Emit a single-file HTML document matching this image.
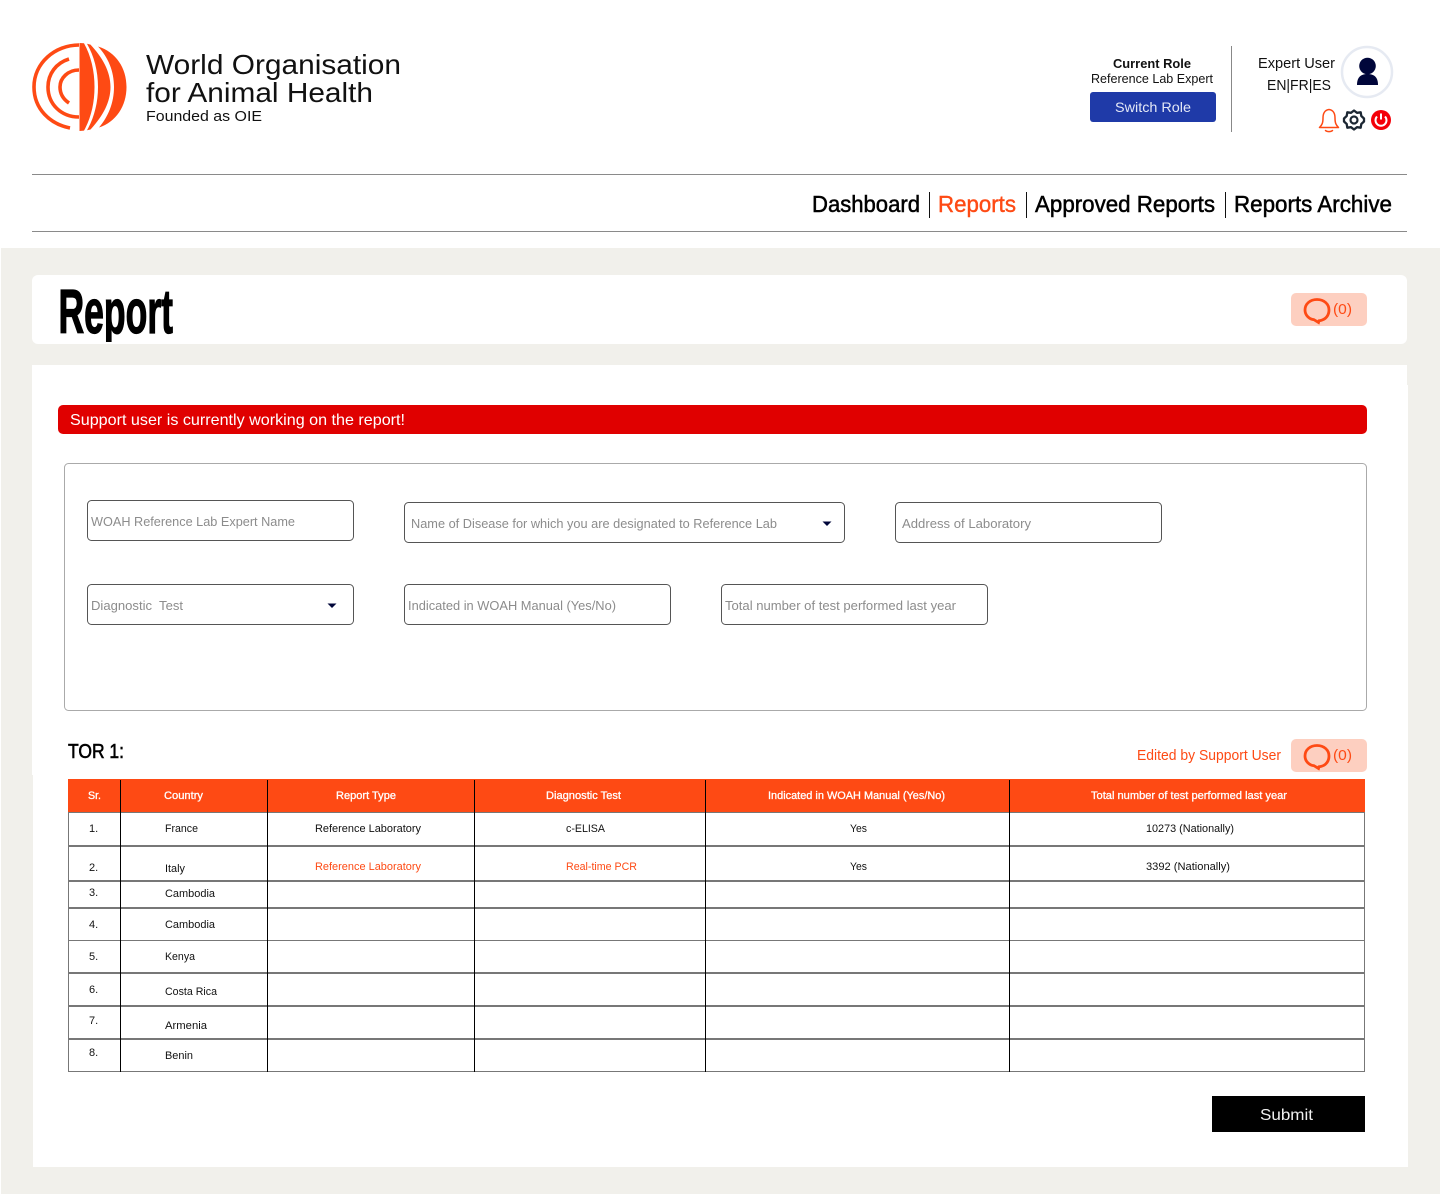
<!DOCTYPE html>
<html lang="en"><head><meta charset="utf-8"><title>Report</title>
<style>
html,body{margin:0;padding:0;background:#fff;width:1440px;height:1194px;overflow:hidden}
svg{display:block;position:absolute;left:0;top:0}
text{font-family:"Liberation Sans",sans-serif;white-space:pre}
.ph{font-size:13px;fill:#8c8c8c}
.th{font-size:11px;fill:#fff;stroke:#fff;stroke-width:.3px}
.td{font-size:11px;fill:#111}
.or{fill:#fe4a14}
</style></head><body>
<svg width="1440" height="1194" viewBox="0 0 1440 1194" xmlns="http://www.w3.org/2000/svg">
<defs><clipPath id="rp"><rect x="50" y="280" width="130" height="62"/></clipPath></defs>
<rect x="1" y="248" width="1439" height="946" fill="#f1f0eb"/>
<!-- logo -->
<g fill="none" stroke="#fe4a14" stroke-width="3.600">
<path d="M79 45C55 45 34 63 34 87C34 109 50 124 70 128"/>
<path d="M69 59C56 63 48 74 48 87C48 104 61 117 79 117"/>
<path d="M79 70C68 70 60 78 60 87C60 94 63 99 69 103"/>
</g>
<g fill="#fe4a14">
<path d="M79.500 43L84 43.300C91 56 94.500 71 94.500 87C94.500 103 91 118 84 130.600L79.500 131Z"/>
<path d="M87 43.800L90.500 44.600C102 57 110.500 71 110.500 87C110.500 103 102 117 90.500 129.500L87 130.300C94 118 98 103 98 87C98 71 94 56 87 43.800Z"/>
<path d="M98 46.500C116 52 126.500 68 126.500 87C126.500 106 116 122 99 127.500C108 117 114 103 114 87C114 71 108 57 98 46.500Z"/>
</g>
<text x="146" y="74" font-size="28" textLength="255" lengthAdjust="spacingAndGlyphs" fill="#111">World Organisation</text>
<text x="146" y="102" font-size="28" textLength="227" lengthAdjust="spacingAndGlyphs" fill="#111">for Animal Health</text>
<text x="146" y="121" font-size="15" textLength="116" lengthAdjust="spacingAndGlyphs" fill="#111">Founded as OIE</text>
<!-- role -->
<text x="1113" y="68" font-size="13" font-weight="700" textLength="78" lengthAdjust="spacingAndGlyphs" fill="#111">Current Role</text>
<text x="1091" y="83" font-size="12.500" textLength="122" lengthAdjust="spacingAndGlyphs" fill="#111">Reference Lab Expert</text>
<rect x="1090" y="92" width="126" height="30" rx="3" fill="#1f3aa8"/>
<text x="1115" y="112" font-size="14" textLength="76" lengthAdjust="spacingAndGlyphs" fill="#e4e8f6">Switch Role</text>
<rect x="1231" y="46" width="1" height="86" fill="#888"/>
<text x="1258" y="68" font-size="14.500" textLength="77" lengthAdjust="spacingAndGlyphs" fill="#111">Expert User</text>
<text x="1267" y="90" font-size="14.500" textLength="64" lengthAdjust="spacingAndGlyphs" fill="#111">EN|FR|ES</text>
<circle cx="1367" cy="72" r="25" fill="#fff" stroke="#e6eaf2" stroke-width="2.500"/>
<circle cx="1367.500" cy="66" r="8.300" fill="#00063a"/>
<path d="M1357 85C1357 77 1361 74 1367.500 74C1374 74 1378 77 1378 85Z" fill="#00063a"/>
<!-- bell -->
<g fill="none" stroke="#fe4a14" stroke-width="1.500" stroke-linejoin="round" stroke-linecap="round">
<path d="M1329 109.500C1324.500 110 1323 114 1323 118C1323 123 1322 125 1319.500 127.500H1338.500C1336 125 1335 123 1335 118C1335 114 1333.500 110 1329 109.500Z"/>
<path d="M1325.500 130.500C1327 132 1331 132 1332.500 130.500"/>
</g>
<!-- gear -->
<path d="M1354 110.500L1357 112.800L1360.700 112.300L1361.300 116L1364 118.500V121.500L1361.300 124L1360.700 127.700L1357 127.200L1354 129.500L1351 127.200L1347.300 127.700L1346.700 124L1344 121.500V118.500L1346.700 116L1347.300 112.300L1351 112.800Z" fill="none" stroke="#1c2733" stroke-width="2.300" stroke-linejoin="round"/>
<circle cx="1354" cy="120" r="3.500" fill="none" stroke="#1c2733" stroke-width="2.200"/>
<!-- power -->
<circle cx="1381" cy="120" r="10" fill="#f40009"/>
<path d="M1377 116.500A5.500 5.500 0 1 0 1385 116.500" fill="none" stroke="#fff" stroke-width="2"/>
<rect x="1380" y="113.500" width="2" height="6" fill="#fff"/>
<!-- nav -->
<rect x="32" y="174" width="1375" height="1" fill="#8a8a8a"/>
<rect x="32" y="231" width="1375" height="1" fill="#8a8a8a"/>
<g font-size="23" stroke-width=".5">
<text x="812" y="212" textLength="108" lengthAdjust="spacingAndGlyphs" fill="#000" stroke="#000">Dashboard</text>
<text x="938" y="212" textLength="78" lengthAdjust="spacingAndGlyphs" fill="#fe4a14" stroke="#fe4a14" stroke-width=".4">Reports</text>
<text x="1035" y="212" textLength="180" lengthAdjust="spacingAndGlyphs" fill="#000" stroke="#000">Approved Reports</text>
<text x="1234" y="212" textLength="158" lengthAdjust="spacingAndGlyphs" fill="#000" stroke="#000">Reports Archive</text>
</g>
<rect x="929" y="192" width="1" height="26" fill="#111"/>
<rect x="1026" y="192" width="1" height="26" fill="#111"/>
<rect x="1225" y="192" width="1" height="26" fill="#111"/>
<!-- report card -->
<rect x="32" y="275" width="1375" height="69" rx="6" fill="#fff"/>
<g clip-path="url(#rp)"><text x="58.500" y="333" font-size="62" font-weight="700" textLength="114.500" lengthAdjust="spacingAndGlyphs" fill="#000" stroke="#000" stroke-width="1.300">Report</text></g>
<rect x="1291" y="293" width="76" height="33" rx="5" fill="#fdcfc0"/>
<path d="M1319 320.800C1326.500 320 1329 314.500 1329 310C1329 304 1324 299.500 1317 299.500C1310 299.500 1305 304 1305 310C1305 315.500 1309.500 319.300 1314 319.700L1318.500 322.500Z" fill="none" stroke="#fe4a14" stroke-width="2.800"/>
<text x="1333" y="314" font-size="15" textLength="19" lengthAdjust="spacingAndGlyphs" class="or">(0)</text>
<!-- main card -->
<rect x="32" y="365" width="1375" height="410" fill="#fff"/>
<rect x="33" y="385" width="1375" height="782" fill="#fff"/>
<rect x="58" y="405" width="1309" height="29" rx="5" fill="#e00000"/>
<text x="70" y="425" font-size="16" textLength="335" lengthAdjust="spacingAndGlyphs" fill="#fff">Support user is currently working on the report!</text>
<rect x="64.500" y="463.500" width="1302" height="247" rx="4" fill="#fff" stroke="#aaa"/>
<g fill="#fff" stroke="#555">
<rect x="87.500" y="500.500" width="266" height="40" rx="4"/>
<rect x="404.500" y="502.500" width="440" height="40" rx="4"/>
<rect x="895.500" y="502.500" width="266" height="40" rx="4"/>
<rect x="87.500" y="584.500" width="266" height="40" rx="4"/>
<rect x="404.500" y="584.500" width="266" height="40" rx="4"/>
<rect x="721.500" y="584.500" width="266" height="40" rx="4"/>
</g>
<text class="ph" x="91" y="526" textLength="204" lengthAdjust="spacingAndGlyphs">WOAH Reference Lab Expert Name</text>
<text class="ph" x="411" y="528" textLength="366" lengthAdjust="spacingAndGlyphs">Name of Disease for which you are designated to Reference Lab</text>
<text class="ph" x="902" y="528" textLength="129" lengthAdjust="spacingAndGlyphs">Address of Laboratory</text>
<text class="ph" x="91" y="610" textLength="92" lengthAdjust="spacingAndGlyphs">Diagnostic  Test</text>
<text class="ph" x="408" y="610" textLength="208" lengthAdjust="spacingAndGlyphs">Indicated in WOAH Manual (Yes/No)</text>
<text class="ph" x="725" y="610" textLength="231" lengthAdjust="spacingAndGlyphs">Total number of test performed last year</text>
<path d="M822.500 521.500H831.500L827 526Z" fill="#00063a"/>
<path d="M327.500 603.500H336.500L332 608Z" fill="#00063a"/>
<!-- TOR -->
<text x="68" y="758" font-size="20" textLength="56" lengthAdjust="spacingAndGlyphs" fill="#000" stroke="#000" stroke-width=".6">TOR 1:</text>
<text x="1137" y="760" font-size="14.500" textLength="144" lengthAdjust="spacingAndGlyphs" class="or">Edited by Support User</text>
<rect x="1291" y="739" width="76" height="33" rx="5" fill="#fdcfc0"/>
<path d="M1319 766.800C1326.500 766 1329 760.500 1329 756C1329 750 1324 745.500 1317 745.500C1310 745.500 1305 750 1305 756C1305 761.500 1309.500 765.300 1314 765.700L1318.500 768.500Z" fill="none" stroke="#fe4a14" stroke-width="2.800"/>
<text x="1333" y="760" font-size="15" textLength="19" lengthAdjust="spacingAndGlyphs" class="or">(0)</text>
<!-- table -->
<rect x="68" y="779" width="1297" height="33" fill="#fe4a14"/>
<g fill="#777">
<rect x="68" y="812" width="1297" height="1"/>
<rect x="68" y="845" width="1297" height="2"/>
<rect x="68" y="880" width="1297" height="2"/>
<rect x="68" y="907" width="1297" height="2"/>
<rect x="68" y="940" width="1297" height="1"/>
<rect x="68" y="972" width="1297" height="2"/>
<rect x="68" y="1005" width="1297" height="2"/>
<rect x="68" y="1038" width="1297" height="2"/>
<rect x="68" y="1071" width="1297" height="1"/>
<rect x="68" y="812" width="1" height="260"/>
<rect x="1364" y="812" width="1" height="260"/>
</g>
<g fill="#000">
<rect x="120" y="780" width="1" height="292"/>
<rect x="267" y="780" width="1" height="292"/>
<rect x="474" y="780" width="1" height="292"/>
<rect x="705" y="780" width="1" height="292"/>
<rect x="1009" y="780" width="1" height="292"/>
</g>
<text class="th" x="88" y="799" textLength="13" lengthAdjust="spacingAndGlyphs">Sr.</text>
<text class="th" x="164" y="799" textLength="39" lengthAdjust="spacingAndGlyphs">Country</text>
<text class="th" x="336" y="799" textLength="60" lengthAdjust="spacingAndGlyphs">Report Type</text>
<text class="th" x="546" y="799" textLength="75" lengthAdjust="spacingAndGlyphs">Diagnostic Test</text>
<text class="th" x="768" y="799" textLength="177" lengthAdjust="spacingAndGlyphs">Indicated in WOAH Manual (Yes/No)</text>
<text class="th" x="1091" y="799" textLength="196" lengthAdjust="spacingAndGlyphs">Total number of test performed last year</text>
<text class="td" x="89" y="832">1.</text>
<text class="td" x="89" y="871">2.</text>
<text class="td" x="89" y="896">3.</text>
<text class="td" x="89" y="928">4.</text>
<text class="td" x="89" y="960">5.</text>
<text class="td" x="89" y="993">6.</text>
<text class="td" x="89" y="1024">7.</text>
<text class="td" x="89" y="1056">8.</text>
<text class="td" x="165" y="832" textLength="33" lengthAdjust="spacingAndGlyphs">France</text>
<text class="td" x="165" y="872" textLength="20" lengthAdjust="spacingAndGlyphs">Italy</text>
<text class="td" x="165" y="897" textLength="50" lengthAdjust="spacingAndGlyphs">Cambodia</text>
<text class="td" x="165" y="928" textLength="50" lengthAdjust="spacingAndGlyphs">Cambodia</text>
<text class="td" x="165" y="960" textLength="30" lengthAdjust="spacingAndGlyphs">Kenya</text>
<text class="td" x="165" y="995" textLength="52" lengthAdjust="spacingAndGlyphs">Costa Rica</text>
<text class="td" x="165" y="1029" textLength="42" lengthAdjust="spacingAndGlyphs">Armenia</text>
<text class="td" x="165" y="1059" textLength="28" lengthAdjust="spacingAndGlyphs">Benin</text>
<text class="td" x="315" y="832" textLength="106" lengthAdjust="spacingAndGlyphs">Reference Laboratory</text>
<text class="td" x="566" y="832" textLength="39" lengthAdjust="spacingAndGlyphs">c-ELISA</text>
<text class="td" x="850" y="832" textLength="17" lengthAdjust="spacingAndGlyphs">Yes</text>
<text class="td" x="1146" y="832" textLength="88" lengthAdjust="spacingAndGlyphs">10273 (Nationally)</text>
<text class="td or" x="315" y="870" textLength="106" lengthAdjust="spacingAndGlyphs" style="fill:#fe4a14">Reference Laboratory</text>
<text class="td or" x="566" y="870" textLength="71" lengthAdjust="spacingAndGlyphs" style="fill:#fe4a14">Real-time PCR</text>
<text class="td" x="850" y="870" textLength="17" lengthAdjust="spacingAndGlyphs">Yes</text>
<text class="td" x="1146" y="870" textLength="84" lengthAdjust="spacingAndGlyphs">3392 (Nationally)</text>
<rect x="1212" y="1096" width="153" height="36" fill="#000"/>
<text x="1260" y="1120" font-size="16" textLength="53" lengthAdjust="spacingAndGlyphs" fill="#f0f0f0">Submit</text>
</svg>
</body></html>
